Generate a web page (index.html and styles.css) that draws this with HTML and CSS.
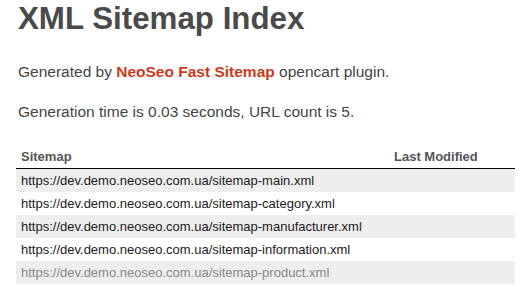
FILE: index.html
```html
<!DOCTYPE html>
<html>
<head>
<meta charset="utf-8">
<title>XML Sitemap Index</title>
<link rel="stylesheet" href="styles.css">
</head>
<body>
<div class="page">
  <h1 class="title">XML Sitemap Index</h1>
  <p class="intro">Generated by <a class="brand" href="#">NeoSeo Fast Sitemap</a> opencart plugin.</p>
  <p class="stats">Generation time is 0.03 seconds, URL count is 5.</p>
  <table class="sitemaps">
    <thead>
      <tr><th class="col-loc">Sitemap</th><th class="col-mod">Last Modified</th></tr>
    </thead>
    <tbody>
      <tr class="odd"><td>https://dev.demo.neoseo.com.ua/sitemap-main.xml</td><td></td></tr>
      <tr><td>https://dev.demo.neoseo.com.ua/sitemap-category.xml</td><td></td></tr>
      <tr class="odd"><td>https://dev.demo.neoseo.com.ua/sitemap-manufacturer.xml</td><td></td></tr>
      <tr><td>https://dev.demo.neoseo.com.ua/sitemap-information.xml</td><td></td></tr>
      <tr class="odd faded"><td>https://dev.demo.neoseo.com.ua/sitemap-product.xml</td><td></td></tr>
    </tbody>
  </table>
</div>
</body>
</html>
```
FILE: styles.css
```css
html, body {
  margin: 0;
  padding: 0;
  background: #fff;
}
.page {
  padding: 0 15px 0 16px;
  font-family: "Liberation Sans", Arial, sans-serif;
  color: #444;
  width: 499px;
}
.title {
  margin: 2px 0 0 2px;
  font-size: 31.3px;
  line-height: 34px;
  font-weight: bold;
  color: #4a4a4a;
}
.intro {
  margin: 27px 0 0 2px;
  font-size: 15.5px;
  line-height: 18px;
}
.brand {
  color: #cc3a1e;
  font-weight: bold;
  text-decoration: none;
}
.stats {
  margin: 22px 0 0 2px;
  font-size: 15.5px;
  line-height: 18px;
}
.sitemaps {
  margin-top: 28px;
  width: 499px;
  border-collapse: collapse;
  font-size: 13px;
}
.sitemaps th {
  text-align: left;
  font-weight: bold;
  font-size: 13px;
  color: #555;
  line-height: 15px;
  padding: 0 5px 4px 5px;
  border-bottom: 1px solid #000;
}
.sitemaps .col-mod {
  width: 116px;
}
.sitemaps td {
  height: 23px;
  padding: 0 5px;
  line-height: 23px;
  color: #1a1a1a;
}
.sitemaps tr.odd td {
  background: #eee;
}
.sitemaps tr.faded td {
  color: #888;
}
```
